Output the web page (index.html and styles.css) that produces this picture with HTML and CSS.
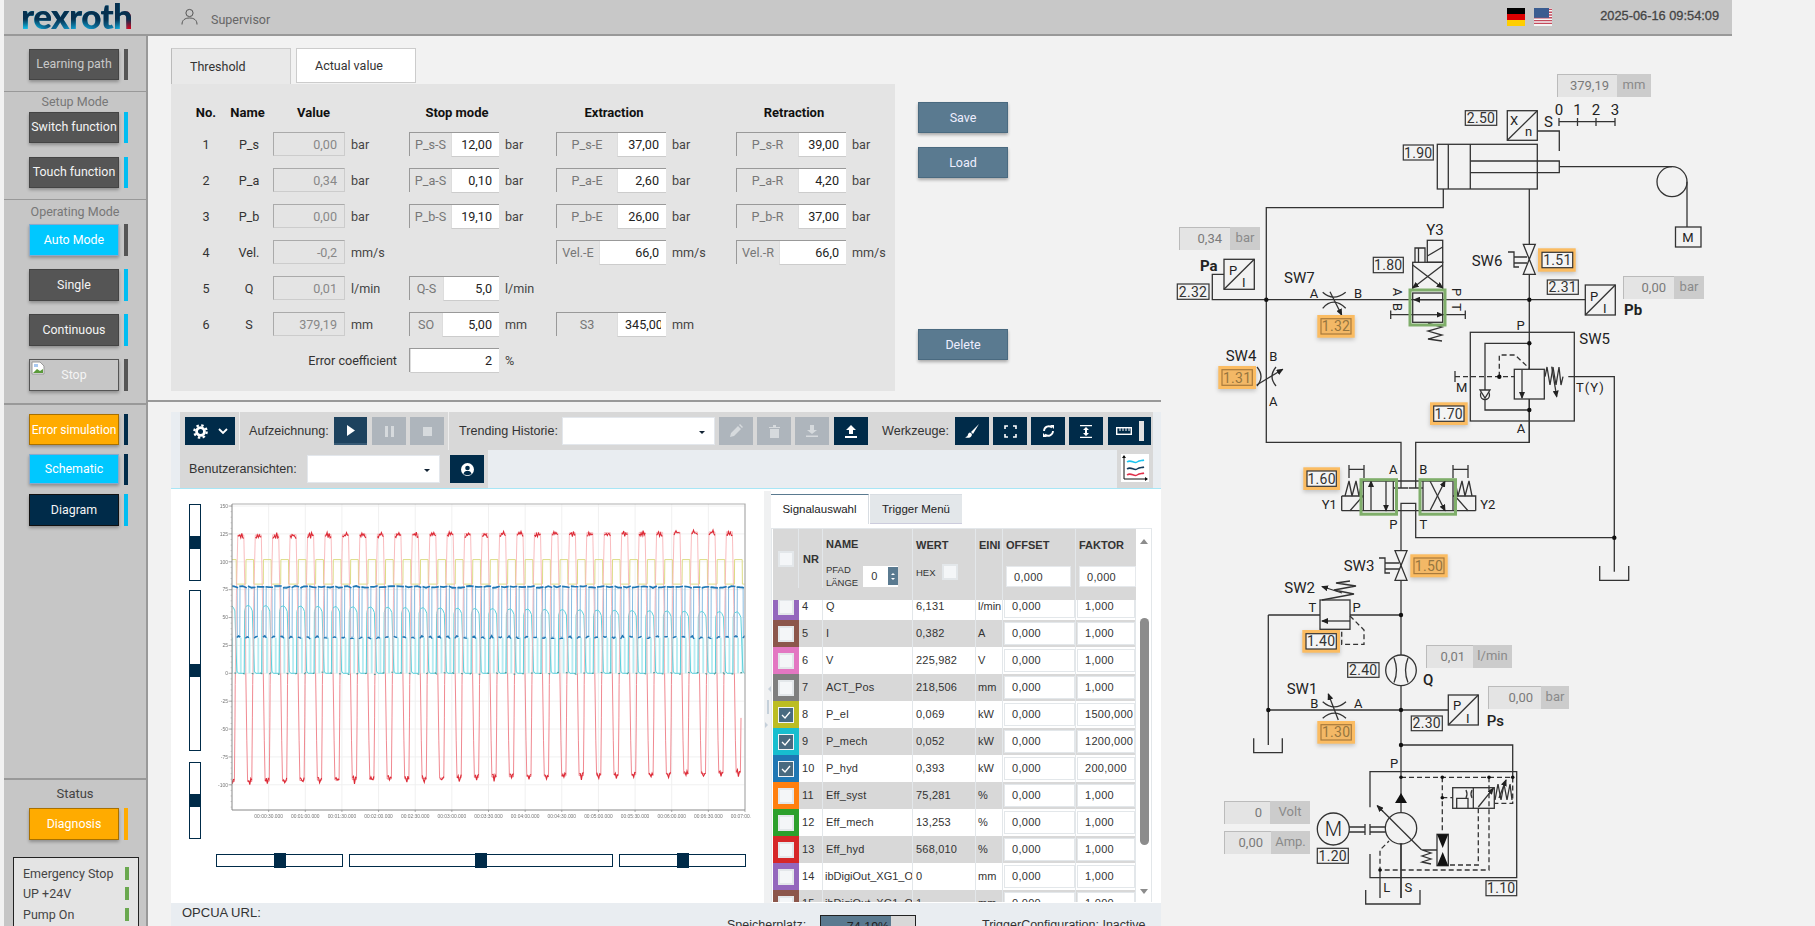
FILE: index.html
```html
<!DOCTYPE html>
<html lang="en">
<head>
<meta charset="utf-8">
<title>rexroth</title>
<link rel="stylesheet" href="styles.css">
</head>
<body>
<div class="app">
  <header class="top">
    <div class="logo">rexroth</div>
    <svg class="user" width="17" height="17" viewBox="0 0 17 17"><circle cx="8.5" cy="5" r="3.6"/><path d="M1 16.5c0-4.500 3-6.500 7.500-6.500s7.500 2 7.500 6.500"/></svg>
    <span class="who">Supervisor</span>
    <svg class="flag de" width="18" height="18" viewBox="0 0 18 18"><rect width="18" height="6" fill="#000"/><rect y="6" width="18" height="6" fill="#d00"/><rect y="12" width="18" height="6" fill="#ffce00"/></svg>
    <svg class="flag us" width="18" height="18" viewBox="0 0 18 18"><rect width="18" height="18" fill="#f4f4f4"/><path d="M0 1.400h18M0 4.200h18M0 7h18M0 9.800h18M0 12.600h18M0 15.400h18" stroke="#c44a5c" stroke-width="1.400"/><rect width="15" height="9.800" fill="#3a5c90"/></svg>
    <span class="clock">2025-06-16 09:54:09</span>
  </header>
  <div class="body">
    <aside class="side">
      <section class="s1">
        <div class="srow"><button class="btn dim">Learning path</button><i class="led grey"></i></div>
      </section>
      <section class="s2">
        <h4>Setup Mode</h4>
        <div class="srow"><button class="btn">Switch function</button><i class="led cyan"></i></div>
        <div class="srow"><button class="btn">Touch function</button><i class="led cyan"></i></div>
      </section>
      <section class="s3">
        <h4>Operating Mode</h4>
        <div class="srow"><button class="btn tall on">Auto Mode</button><i class="led grey tallled"></i></div>
        <div class="srow"><button class="btn tall">Single</button><i class="led cyan tallled"></i></div>
        <div class="srow"><button class="btn tall">Continuous</button><i class="led cyan tallled"></i></div>
        <div class="srow"><button class="btn tall stop"><svg class="broken" width="14" height="14" viewBox="0 0 14 14"><path d="M1 1h8l4 4v8H1z" fill="#fff" stroke="#999"/><path d="M2 12l4-4 3 2 3-2v4z" fill="#5a9a3a"/><path d="M3 3h4v3H3z" fill="#a8c8f0"/></svg>Stop</button><i class="led grey tallled"></i></div>
      </section>
      <section class="s4">
        <div class="srow"><button class="btn orange errb">Error simulation</button><i class="led navy"></i></div>
        <div class="srow"><button class="btn on sm">Schematic</button><i class="led navy"></i></div>
        <div class="srow"><button class="btn navybtn tall">Diagram</button><i class="led cyan tallled"></i></div>
      </section>
      <section class="s5">
        <h4 class="status">Status</h4>
        <div class="srow"><button class="btn orange tall">Diagnosis</button><i class="led orangeled tallled"></i></div>
        <div class="statusbox">
          <div class="st"><span>Emergency Stop</span><i></i></div>
          <div class="st"><span>UP +24V</span><i></i></div>
          <div class="st"><span>Pump On</span><i></i></div>
        </div>
      </section>
    </aside>

    <main class="left">
      <div class="upper">
        <div class="params">
          <div class="tabs">
            <div class="tab active">Threshold</div>
            <div class="tab white">Actual value</div>
          </div>
          <div class="panel">
            <div class="pgrid">
              <b class="ph c">No.</b><b class="ph c2">Name</b><b class="ph c3">Value</b><span></span><b class="ph c5">Stop mode</b><span></span><b class="ph c5">Extraction</b><span></span><b class="ph c5">Retraction</b><span></span>

              <span class="c">1</span><span class="c2">P_s</span><span class="val">0,00</span><span class="u">bar</span>
              <div class="ig"><span class="il">P_s-S</span><span class="in w48">12,00</span></div><span class="u">bar</span>
              <div class="ig"><span class="il">P_s-E</span><span class="in w49">37,00</span></div><span class="u">bar</span>
              <div class="ig"><span class="il">P_s-R</span><span class="in w48">39,00</span></div><span class="u">bar</span>

              <span class="c">2</span><span class="c2">P_a</span><span class="val">0,34</span><span class="u">bar</span>
              <div class="ig"><span class="il">P_a-S</span><span class="in w48">0,10</span></div><span class="u">bar</span>
              <div class="ig"><span class="il">P_a-E</span><span class="in w49">2,60</span></div><span class="u">bar</span>
              <div class="ig"><span class="il">P_a-R</span><span class="in w48">4,20</span></div><span class="u">bar</span>

              <span class="c">3</span><span class="c2">P_b</span><span class="val">0,00</span><span class="u">bar</span>
              <div class="ig"><span class="il">P_b-S</span><span class="in w48">19,10</span></div><span class="u">bar</span>
              <div class="ig"><span class="il">P_b-E</span><span class="in w49">26,00</span></div><span class="u">bar</span>
              <div class="ig"><span class="il">P_b-R</span><span class="in w48">37,00</span></div><span class="u">bar</span>

              <span class="c">4</span><span class="c2">Vel.</span><span class="val">-0,2</span><span class="u">mm/s</span>
              <span></span><span></span>
              <div class="ig"><span class="il">Vel.-E</span><span class="in w67">66,0</span></div><span class="u">mm/s</span>
              <div class="ig"><span class="il">Vel.-R</span><span class="in w67">66,0</span></div><span class="u">mm/s</span>

              <span class="c">5</span><span class="c2">Q</span><span class="val">0,01</span><span class="u">l/min</span>
              <div class="ig"><span class="il">Q-S</span><span class="in w56">5,0</span></div><span class="u">l/min</span>
              <span></span><span></span><span></span><span></span>

              <span class="c">6</span><span class="c2">S</span><span class="val">379,19</span><span class="u">mm</span>
              <div class="ig"><span class="il">SO</span><span class="in w57">5,00</span></div><span class="u">mm</span>
              <div class="ig"><span class="il">S3</span><span class="in w49 clip"><span>345,00</span></span></div><span class="u">mm</span>
              <span></span><span></span>

              <span class="errlab">Error coefficient</span>
              <div class="ig"><span class="in wfull">2</span></div><span class="u">%</span>
            </div>
          </div>
        </div>
        <div class="actions">
          <button class="act save">Save</button>
          <button class="act load">Load</button>
          <button class="act del">Delete</button>
        </div>
      </div>

      <div class="trend">
        <div class="tb">
          <div class="tb1">
            <button class="ib gearb"><svg width="15" height="15" viewBox="0 0 16 16"><circle cx="8" cy="8" r="4.200" fill="none" stroke="#fff" stroke-width="3"/><circle cx="8" cy="8" r="6.600" fill="none" stroke="#fff" stroke-width="2.400" stroke-dasharray="2.600 2.580"/></svg><svg class="chev" width="10" height="7" viewBox="0 0 10 7"><path d="M1 1l4 4 4-4" fill="none" stroke="#fff" stroke-width="1.800"/></svg></button>
            <i class="sep s-a"></i>
            <span class="tl l-a">Aufzeichnung:</span>
            <button class="ib pl"><svg width="10" height="11" viewBox="0 0 10 11"><path d="M1 0l8 5.500-8 5.500z" fill="#fff"/></svg></button>
            <button class="ib off m5"><svg width="9" height="11" viewBox="0 0 9 11"><path d="M0 0h3v11H0zM6 0h3v11H6z" fill="#d6dadd"/></svg></button>
            <button class="ib off m4"><svg width="9" height="9" viewBox="0 0 9 9"><path d="M0 0h9v9H0z" fill="#d6dadd"/></svg></button>
            <i class="sep s-b"></i>
            <span class="tl l-t">Trending Historie:</span>
            <div class="sel sel-t"><i class="caret"></i></div>
            <button class="ib off m4"><svg width="14" height="14" viewBox="0 0 14 14"><path d="M1 13l1-4 7-7 3 3-7 7zM10 1l1-1 3 3-1 1z" fill="#d6dadd"/></svg></button>
            <button class="ib off m4"><svg width="11" height="13" viewBox="0 0 11 13"><path d="M0 2h11v1H0zM4 0h3v2H4zM1 4h9v9H1z" fill="#d6dadd"/></svg></button>
            <button class="ib off m4"><svg width="12" height="12" viewBox="0 0 12 12"><path d="M4 0h4v5h3L6 9 1 5h3zM0 10.500h12V12H0z" fill="#d6dadd"/></svg></button>
            <button class="ib nv m5"><svg width="12" height="13" viewBox="0 0 12 13"><path d="M6 0l5 5H8v4H4V5H1zM0 11h12v2H0z" fill="#fff"/></svg></button>
            <span class="tl l-w">Werkzeuge:</span>
            <button class="ib nv m5"><svg width="14" height="14" viewBox="0 0 14 14"><path d="M14 0L6 8l2 2zM5 8.500C3 9 3 11 2.500 12 2 12.500 1 13 0 13c2 1.500 5.500 1 6.500-1 .5-1 .5-2 0-2.500z" fill="#fff"/></svg></button>
            <button class="ib nv m4"><svg width="13" height="13" viewBox="0 0 13 13"><path d="M1 4V1h3M9 1h3v3M12 9v3H9M4 12H1V9" fill="none" stroke="#fff" stroke-width="1.600"/></svg></button>
            <button class="ib nv m4"><svg width="13" height="14" viewBox="0 0 13 14"><path d="M2 7a4.800 4.800 0 0 1 8-3.500M11 7a4.800 4.800 0 0 1-8 3.500" fill="none" stroke="#fff" stroke-width="1.800"/><path d="M8 1h4v4zM5 13H1V9z" fill="#fff"/></svg></button>
            <button class="ib nv m4"><svg width="12" height="13" viewBox="0 0 12 13"><path d="M0 .5h12M0 12.500h12" stroke="#fff" stroke-width="1.400"/><path d="M6 2l3 3H3zM6 11l3-3H3z" fill="#fff"/><path d="M5 4.500h2v4H5z" fill="#fff"/></svg></button>
            <button class="ib nv ruler"><svg width="16" height="8" viewBox="0 0 16 8"><rect x=".7" y=".7" width="14.600" height="6.600" fill="none" stroke="#fff" stroke-width="1.400"/><path d="M4 1v3M7 1v3M10 1v3M13 1v3" stroke="#fff"/></svg><i class="rbar"></i></button>
          </div>
          <div class="tb2">
            <div class="tb2l">
              <span class="tl l-b">Benutzeransichten:</span>
              <div class="sel sel-b"><i class="caret"></i></div>
              <button class="ib nv ub"><svg width="13" height="13" viewBox="0 0 13 13"><circle cx="6.500" cy="6.500" r="6.500" fill="#fff"/><circle cx="6.500" cy="5" r="2.300" fill="#002b49"/><path d="M2.500 11c.5-2.500 2-3 4-3s3.500.5 4 3c-2 1.500-6 1.500-8 0z" fill="#002b49"/></svg></button>
            </div>
            <div class="tb2r"><svg width="28" height="28" viewBox="0 0 28 28"><rect width="28" height="28" fill="#fff"/><path d="M3 2v23h23" fill="none" stroke="#111" stroke-width="1"/><path d="M3 1l-2 3h4zM27 25l-3-2v4z" fill="#111"/><path d="M6 8c4-3 7 2 10 0s5-1 7-2" fill="none" stroke="#19c4f0" stroke-width="1.500"/><path d="M6 15c4-3 7 2 10 0s5-1 7-2" fill="none" stroke="#123a5a" stroke-width="1.500"/><path d="M6 21c4-3 7 2 10 0s5-1 7-2" fill="none" stroke="#e0304a" stroke-width="1.500"/></svg></div>
          </div>
        </div>
        <div class="content">
          <div class="chartcol">
            <div class="chartrow">
              <div class="vsl">
                <div class="vs vs1"><i></i></div>
                <div class="vs vs2"><i></i></div>
                <div class="vs vs3"><i></i></div>
              </div>
              <svg id="chart" class="chart" viewBox="206 496 545 340" width="545" height="340"></svg>
            </div>
            <div class="hsl">
              <div class="hs h1"><i></i></div>
              <div class="hs h2"><i></i></div>
              <div class="hs h3"><i></i></div>
            </div>
          </div>
          <div class="split"><i class="a"></i><i class="b"></i><i class="a2"></i></div>
          <div class="sig">
            <div class="sigtabs"><div class="st1">Signalauswahl</div><div class="st2">Trigger Menü</div></div>
            <div class="sigbox">
              <div class="sigtable">
                <div class="shead">
                  <div class="hc hc-c"><i class="cb"></i></div>
                  <div class="hc hc-nr">NR</div>
                  <div class="hc hc-name"><b>NAME</b><div class="pfad"><span>PFAD<br>LÄNGE</span><div class="spin"><em>0</em><i><u></u><s></s></i></div></div></div>
                  <div class="hc hc-wert"><b>WERT</b><div class="hex"><span>HEX</span><i class="cb"></i></div></div>
                  <div class="hc hc-eh"><b>EINI</b></div>
                  <div class="hc hc-of"><b>OFFSET</b><div class="hin">0,000</div></div>
                  <div class="hc hc-fa"><b>FAKTOR</b><div class="hin">0,000</div></div>
                </div>
                <div class="srows">
                  <div class="r first"><div class="k k4"><i class="cb"></i></div><span>4</span><span>Q</span><span>6,131</span><span class="eh">l/min</span><div class="ci"><em>0,000</em></div><div class="ci"><em>1,000</em></div></div>
                  <div class="r alt"><div class="k k5"><i class="cb"></i></div><span>5</span><span>I</span><span>0,382</span><span class="eh">A</span><div class="ci"><em>0,000</em></div><div class="ci"><em>1,000</em></div></div>
                  <div class="r"><div class="k k6"><i class="cb"></i></div><span>6</span><span>V</span><span>225,982</span><span class="eh">V</span><div class="ci"><em>0,000</em></div><div class="ci"><em>1,000</em></div></div>
                  <div class="r alt"><div class="k k7"><i class="cb"></i></div><span>7</span><span>ACT_Pos</span><span>218,506</span><span class="eh">mm</span><div class="ci"><em>0,000</em></div><div class="ci"><em>1,000</em></div></div>
                  <div class="r"><div class="k k8"><i class="cb chk"><svg width="10" height="8" viewBox="0 0 10 8"><path d="M1 4l3 3 5-6" fill="none" stroke="#fff" stroke-width="1.300"/></svg></i></div><span>8</span><span>P_el</span><span>0,069</span><span class="eh">kW</span><div class="ci"><em>0,000</em></div><div class="ci"><em>1500,000</em></div></div>
                  <div class="r alt"><div class="k k9"><i class="cb chk"><svg width="10" height="8" viewBox="0 0 10 8"><path d="M1 4l3 3 5-6" fill="none" stroke="#fff" stroke-width="1.300"/></svg></i></div><span>9</span><span>P_mech</span><span>0,052</span><span class="eh">kW</span><div class="ci"><em>0,000</em></div><div class="ci"><em>1200,000</em></div></div>
                  <div class="r"><div class="k k10"><i class="cb chk"><svg width="10" height="8" viewBox="0 0 10 8"><path d="M1 4l3 3 5-6" fill="none" stroke="#fff" stroke-width="1.300"/></svg></i></div><span>10</span><span>P_hyd</span><span>0,393</span><span class="eh">kW</span><div class="ci"><em>0,000</em></div><div class="ci"><em>200,000</em></div></div>
                  <div class="r alt"><div class="k k11"><i class="cb"></i></div><span>11</span><span>Eff_syst</span><span>75,281</span><span class="eh">%</span><div class="ci"><em>0,000</em></div><div class="ci"><em>1,000</em></div></div>
                  <div class="r"><div class="k k12"><i class="cb"></i></div><span>12</span><span>Eff_mech</span><span>13,253</span><span class="eh">%</span><div class="ci"><em>0,000</em></div><div class="ci"><em>1,000</em></div></div>
                  <div class="r alt"><div class="k k13"><i class="cb"></i></div><span>13</span><span>Eff_hyd</span><span>568,010</span><span class="eh">%</span><div class="ci"><em>0,000</em></div><div class="ci"><em>1,000</em></div></div>
                  <div class="r"><div class="k k4"><i class="cb"></i></div><span>14</span><span class="nm">ibDigiOut_XG1_O</span><span>0</span><span class="eh">mm</span><div class="ci"><em>0,000</em></div><div class="ci"><em>1,000</em></div></div>
                  <div class="r alt"><div class="k k5"><i class="cb"></i></div><span>15</span><span class="nm">ibDigiOut_XG1_O</span><span>1</span><span class="eh">mm</span><div class="ci"><em>0,000</em></div><div class="ci"><em>1,000</em></div></div>
                </div>
              </div>
              <div class="vscroll"><i class="up"></i><i class="thumb"></i><i class="down"></i></div>
            </div>
          </div>
        </div>
        <div class="foot">
          <span class="opc">OPCUA URL:</span>
          <span class="mem">Speicherplatz:</span>
          <div class="bar"><i></i><span>74,19%</span></div>
          <span class="trig">TriggerConfiguration: Inactive</span>
        </div>
      </div>
    </main>

    <div class="scheme">
      <svg class="diagram" viewBox="1161 36 571 890" width="571" height="890">
        <defs>
          <marker id="ah" markerWidth="7" markerHeight="6" refX="6" refY="3" orient="auto" markerUnits="userSpaceOnUse"><path d="M0 0L7 3L0 6z" fill="#222"/></marker>
        </defs>
        <g class="ln">
          <!-- position sensor -->
          <rect x="1507.300" y="110.700" width="30" height="29.600"/><path d="M1507.300 140.300L1537.300 110.700"/>
          <path d="M1559 121.700H1615M1559 118V126M1577.500 118V126M1596 118V126M1615 118V126"/>
          <path d="M1537.300 131H1559.300V151"/>
          <!-- cylinder -->
          <rect x="1437.300" y="144.300" width="100" height="44.700"/>
          <path d="M1448.300 144.300V189M1470.300 144.300V189"/>
          <path d="M1470.300 161H1559.300V172.700H1470.300"/>
          <path d="M1559.300 166.700H1672"/>
          <circle cx="1672" cy="181.700" r="15"/>
          <path d="M1687 181.700V227"/>
          <rect x="1675.500" y="227" width="25.500" height="20"/>
          <!-- pipes -->
          <path d="M1443.300 189V207.700H1266.300V442.300H1401V488"/>
          <path d="M1529.300 189V442.300H1415.700V488"/>
          <path d="M1415.700 510.700V537.700H1614.300"/>
          <path d="M1401 510.700V898"/>
          <path d="M1401 510.700V503.300H1415.700V510.700"/>
          <path d="M1394 488H1408M1408.700 488H1423"/>
          <path d="M1568.300 376.700H1614.300V571.700"/>
          <path d="M1599.700 566V580.300H1628.700V566"/>
          <path d="M1224 274.300H1212.300V299.700H1585.300"/>
          <rect x="1224" y="259.300" width="30.300" height="30"/><path d="M1224 289.300L1254.300 259.300"/>
          <rect x="1585.300" y="285" width="30" height="30"/><path d="M1585.300 315L1615.300 285"/>
          <!-- throttle SW7 -->
          <path d="M1322.700 292.300Q1333.300 302 1345.700 292.300M1322.700 308.300Q1333.300 296 1345.700 308.300"/>
          <path d="M1330 291.700L1341.700 315" marker-end="url(#ah)"/>
          <!-- valve Y3 -->
          <rect x="1427.300" y="240.300" width="15.400" height="22"/><path d="M1427.300 256L1442.700 247"/>
          <path d="M1415 262.300V248H1425V262.300M1418.500 248V262.300"/>
          <rect x="1412.700" y="262.300" width="30" height="27.700"/>
          <path d="M1412.700 265L1442.700 288" marker-end="url(#ah)"/><path d="M1442.700 265L1412.700 288" marker-end="url(#ah)"/>
          <rect x="1412.700" y="293" width="30" height="29.300"/>
          <path d="M1442.700 299.700H1414" marker-end="url(#ah)"/><path d="M1412.700 314.700H1442.700" marker-end="url(#ah)"/>
          <path d="M1428 323L1442 327L1428 331L1442 335L1428 339L1442 341"/>
          <path d="M1390.700 314.700H1412.700M1390.700 310.500V319M1442.700 314.700H1465.300M1465.300 310.500V319"/>
          <!-- SW6 -->
          <path d="M1523.300 244.300H1535.300L1529.300 259.300ZM1529.300 259.300L1523.300 274.300H1535.300Z" class="bg"/>
          <path d="M1508 252H1514V267H1519M1514 257H1527M1514 263H1527"/>
          <!-- SW5 -->
          <rect x="1470.300" y="332.300" width="104" height="88.700"/>
          <path d="M1529.300 343.300H1485V410H1529.300"/>
          <rect x="1514.300" y="369.300" width="30" height="29.700" class="bg"/>
          <path d="M1522 370V398" marker-end="url(#ah)"/>
          <path d="M1529.300 343.300V369.300M1529.300 399V442.300"/>
          <path class="dash" d="M1499.300 376.700V355H1515L1529.300 368.300"/>
          <path class="dash" d="M1455 376.700H1514.300"/>
          <path d="M1455 371V382"/>
          <circle cx="1485" cy="395" r="4.500" class="bg"/><path d="M1480 390L1490 390L1485 398Z" class="bg"/>
          <path d="M1545 376.700L1547 367L1550 385L1553 367L1556 385L1559 367L1561 385L1563 376.700"/>
          <path d="M1551.700 366.700L1556.700 396.700" marker-end="url(#ah)"/>
          <!-- SW4 throttle -->
          <path d="M1257 367Q1265 376.700 1257 386M1276 367Q1268 376.700 1276 386"/>
          <path d="M1256.700 385L1282.700 369.300" marker-end="url(#ah)"/>
          <!-- 2 pos valve -->
          <path d="M1363.300 481H1452.700M1341.700 510.700H1475.700"/>
          <path d="M1363.300 481V510.700M1393.300 481V510.700M1423 481V510.700M1453 481V510.700"/>
          <path d="M1371 510.700V481" marker-end="url(#ah)"/><path d="M1386 481V510.700" marker-end="url(#ah)"/>
          <path d="M1430 510.700L1445 481" marker-end="url(#ah)"/><path d="M1430 481L1445 510.700" marker-end="url(#ah)"/>
          <path d="M1341.700 496H1363.300M1341.700 496V510.700M1350 510.700L1363 496"/>
          <path d="M1453 496H1475.700V510.700M1455 496L1468 510.700"/>
          <path d="M1345 496L1349 481L1352 496L1356 481L1359 496L1362 481"/>
          <path d="M1455 481L1458 496L1462 481L1465 496L1469 481L1472 496"/>
          <path d="M1349 469.300H1364M1349 465V478M1364 465V478M1453 469.300H1468M1453 465V478M1468 465V478"/>
          <!-- SW3 -->
          <path d="M1395 550.700H1407L1401 565.500ZM1401 565.500L1395 580.300H1407Z" class="bg"/>
          <path d="M1379 558H1385V573H1390M1385 563H1399M1385 569H1399"/>
          <!-- SW2 -->
          <rect x="1320" y="600" width="30" height="29.300"/>
          <path d="M1350 621H1322" marker-end="url(#ah)"/>
          <path d="M1268.300 615H1320M1350 615H1401M1268.300 615V745"/>
          <path class="dash" d="M1350 616L1364 630V644.300H1341.700V630"/>
          <path d="M1322 600L1354 594L1334 590L1356 586L1336 583L1350 581"/>
          <path d="M1342 593L1322 586.500" marker-end="url(#ah)"/>
          <!-- flow meter -->
          <circle cx="1401" cy="670.300" r="15.300" class="bg"/>
          <path d="M1394 658Q1399 670.300 1394 682.600M1408 658Q1403 670.300 1408 682.600"/>
          <!-- SW1 line -->
          <path d="M1268.300 710H1448.300"/>
          <path d="M1322.700 701.700Q1334.300 712 1346 701.700M1322.700 718.300Q1334.300 708 1346 718.300"/>
          <path d="M1338.300 720L1328.300 694" marker-end="url(#ah)"/>
          <path d="M1253.700 738.300V752.700H1282.300V738.300"/>
          <rect x="1448.300" y="695" width="30" height="30"/><path d="M1448.300 725L1478.300 695"/>
          <!-- pump -->
          <path d="M1401 745H1512.700V777.300"/>
          <path d="M1370 807.300V771.700H1516.700V877.700H1370V854"/>
          <path class="dash" d="M1401 777.300H1512.700V803.300H1494.300"/>
          <path class="dash" d="M1442.300 777.300V833.300M1442.300 797.700H1452.700"/>
          <path class="dash" d="M1489 777.300V870H1380V850L1389 841"/>
          <path class="dash" d="M1478.300 808.300V865H1448.300"/>
          <rect x="1452.700" y="787.700" width="41.600" height="20.600"/>
          <path d="M1473.300 787.700V808.300M1456.700 808.300V798.300H1468V808.300"/>
          <path d="M1466 790Q1468 794 1466 798M1472 790Q1470 794 1472 798"/>
          <path d="M1478.300 807L1493.300 788.300" marker-end="url(#ah)"/>
          <path d="M1495 800L1498 784L1501 800L1504 784L1507 800L1510 784L1512 800"/>
          <path d="M1499 798L1506 780" marker-end="url(#ah)"/>
          <circle cx="1401" cy="828.300" r="15.700" class="bg"/>
          <path d="M1377.300 805.700L1421.700 850"/>
          <path d="M1383 811.400L1377.300 805.700" marker-end="url(#ah)"/>
          <path d="M1349 827H1365M1349 832H1365M1365 824V835M1370 824V835M1370 827H1385.300M1370 832H1385.300"/>
          <circle cx="1333.300" cy="829" r="16" class="bg"/>
          <path d="M1422 850H1437M1422 850L1431 853L1422 856L1431 859L1422 862L1431 864"/>
          <rect x="1437" y="834.300" width="11.300" height="31.400"/>
          <path d="M1380 870V898M1401 843V898"/>
          <path d="M1365.700 890V904H1420V890"/>
        </g>
        <path d="M1395 803L1407 803L1401 793Z" fill="#111"/>
        <path d="M1437 834.300H1448.300L1442.700 848ZM1437 865.700H1448.300L1442.700 852Z" fill="#111"/>
        <g class="dots">
          <circle cx="1266.300" cy="299.700" r="2.200"/><circle cx="1529.300" cy="299.700" r="2.200"/>
          <circle cx="1529.300" cy="343.300" r="2.200"/><circle cx="1529.300" cy="410" r="2.200"/>
          <circle cx="1499.300" cy="376.700" r="2.200"/><circle cx="1614.300" cy="537.700" r="2.200"/>
          <circle cx="1401" cy="615" r="2.200"/><circle cx="1268.300" cy="710" r="2.200"/>
          <circle cx="1401" cy="710" r="2.200"/><circle cx="1401" cy="745" r="2.200"/>
          <circle cx="1401" cy="777.300" r="1.800"/><circle cx="1442.300" cy="777.300" r="1.800"/>
          <circle cx="1489" cy="777.300" r="1.800"/><circle cx="1512.700" cy="777.300" r="1.800"/>
          <circle cx="1442.300" cy="797.700" r="1.800"/><circle cx="1380" cy="870" r="1.800"/>
        </g>
        <g class="dt">
          <text x="1544" y="127">S</text>
          <text x="1559" y="115" class="mid">0</text><text x="1577.500" y="115" class="mid">1</text><text x="1596" y="115" class="mid">2</text><text x="1615" y="115" class="mid">3</text>
          <text x="1510" y="125" class="sm">X</text><text x="1525" y="136" class="sm">n</text>
          <text x="1229" y="275" class="sm">P</text><text x="1242" y="287" class="sm">I</text>
          <text x="1590" y="301" class="sm">P</text><text x="1603" y="313" class="sm">I</text>
          <text x="1453" y="710" class="sm">P</text><text x="1466" y="723" class="sm">I</text>
          <text x="1688" y="242" class="sm mid">M</text>
          <text x="1200" y="271" class="bd">Pa</text>
          <text x="1624" y="315" class="bd">Pb</text>
          <text x="1486.700" y="726" class="bd2">Ps</text>
          <text x="1284" y="283">SW7</text>
          <text x="1314" y="298" class="sm mid">A</text><text x="1358" y="298" class="sm mid">B</text>
          <text x="1435" y="235" class="mid">Y3</text>
          <text x="1471.700" y="266">SW6</text>
          <text x="1520.700" y="330" class="sm mid">P</text>
          <text x="1579.300" y="344">SW5</text>
          <text x="1225.700" y="361">SW4</text>
          <text x="1273.300" y="361" class="sm mid">B</text><text x="1273.300" y="406" class="sm mid">A</text>
          <text x="1461.700" y="392" class="sm mid">M</text>
          <text x="1576" y="392" class="sm ty">T(Y)</text>
          <text x="1521" y="433" class="sm mid">A</text>
          <text x="1393.300" y="474" class="sm mid">A</text><text x="1423.300" y="474" class="sm mid">B</text>
          <text x="1393.300" y="529" class="sm mid">P</text><text x="1423.300" y="529" class="sm mid">T</text>
          <text x="1329.300" y="509" class="sm mid">Y1</text><text x="1487.700" y="509" class="sm mid">Y2</text>
          <text x="1343.700" y="571">SW3</text>
          <text x="1284.300" y="593">SW2</text>
          <text x="1312.300" y="612" class="sm mid">T</text><text x="1356.700" y="612" class="sm mid">P</text>
          <text x="1423" y="685" class="bd2">Q</text>
          <text x="1286.700" y="694">SW1</text>
          <text x="1314.300" y="708" class="sm mid">B</text><text x="1358.300" y="708" class="sm mid">A</text>
          <text x="1394" y="768" class="sm mid">P</text>
          <text x="1386.700" y="892" class="sm mid">L</text><text x="1408.300" y="892" class="sm mid">S</text>
          <text x="1333.300" y="836" class="big mid">M</text>
          <text class="sm mid" transform="translate(1393 292) rotate(90)">A</text>
          <text class="sm mid" transform="translate(1393 307) rotate(90)">B</text>
          <text class="sm mid" transform="translate(1452 292) rotate(90)">P</text>
          <text class="sm mid" transform="translate(1452 307) rotate(90)">T</text>
        </g>
        <g class="tagn">
          <rect x="1465.300" y="110.700" width="31.400" height="14.600"/><text x="1481" y="123">2.50</text>
          <rect x="1403.300" y="145" width="30" height="15"/><text x="1418.300" y="157.500">1.90</text>
          <rect x="1177.300" y="284" width="31.700" height="15.300"/><text x="1193" y="296.500">2.32</text>
          <rect x="1373.300" y="257.300" width="30" height="15.400"/><text x="1388.300" y="270">1.80</text>
          <rect x="1547.300" y="280" width="31" height="14.300"/><text x="1562.800" y="292">2.31</text>
          <rect x="1347.700" y="662.700" width="31.300" height="14.600"/><text x="1363.300" y="675">2.40</text>
          <rect x="1411.300" y="716" width="31" height="14.700"/><text x="1426.800" y="728">2.30</text>
          <rect x="1317.300" y="848.300" width="31" height="15"/><text x="1332.800" y="860.500">1.20</text>
          <rect x="1486" y="880.700" width="30.700" height="15"/><text x="1501.300" y="893">1.10</text>
        </g>
        <g class="tago">
          <rect class="o" x="1538" y="248.300" width="37.700" height="23.400"/><rect class="w" x="1542" y="252.300" width="30.700" height="15.400"/><text x="1557.400" y="265">1.51</text>
          <rect class="o" x="1303.300" y="467.300" width="36.700" height="22.700"/><rect class="w" x="1307" y="471" width="29.300" height="15.300"/><text x="1321.700" y="483.500">1.60</text>
          <rect class="o" x="1302.300" y="630" width="37.700" height="22.700"/><rect class="w" x="1306" y="633.700" width="30.300" height="15.300"/><text x="1321.200" y="646">1.40</text>
          <rect class="o" x="1430" y="402.300" width="37.700" height="22.700"/><rect class="w" x="1433.700" y="406" width="30.300" height="15.300"/><text x="1448.800" y="418.500">1.70</text>
        </g>
        <g class="tago f">
          <rect class="o" x="1317.300" y="315" width="37.400" height="22.700"/><rect class="w" x="1321" y="318.700" width="30" height="15.300"/><text x="1336" y="331">1.32</text>
          <rect class="o" x="1218.300" y="366" width="37.700" height="23"/><rect class="w" x="1222" y="369.700" width="30.300" height="15.600"/><text x="1237.200" y="382.500">1.31</text>
          <rect class="o" x="1410.300" y="554.300" width="37.400" height="23"/><rect class="w" x="1414" y="558" width="30" height="15.600"/><text x="1429" y="570.500">1.50</text>
          <rect class="o" x="1317.300" y="721" width="37.700" height="22.700"/><rect class="w" x="1321" y="724.700" width="30.300" height="15.300"/><text x="1336.200" y="737">1.30</text>
        </g>
        <g class="green">
          <rect x="1410" y="290" width="35" height="35"/>
          <rect x="1361" y="479.700" width="35.500" height="34.500"/>
          <rect x="1420" y="479.700" width="35.500" height="34.500"/>
        </g>
      </svg>
      <div class="disp d1"><span class="v">379,19</span><span class="un">mm</span></div>
      <div class="disp d2"><span class="v">0,34</span><span class="un">bar</span></div>
      <div class="disp d3"><span class="v">0,00</span><span class="un">bar</span></div>
      <div class="disp d4"><span class="v">0,01</span><span class="un">l/min</span></div>
      <div class="disp d5"><span class="v">0,00</span><span class="un">bar</span></div>
      <div class="disp d6"><span class="v">0</span><span class="un">Volt</span></div>
      <div class="disp d7"><span class="v">0,00</span><span class="un">Amp.</span></div>
    </div>
  </div>
</div>
<script src="chart.js"></script>
</body>
</html>
```
FILE: styles.css
```css
*{box-sizing:border-box}
html,body{margin:0;height:926px;overflow:hidden}
body{background:#f2f2f2;font-family:Roboto,"Liberation Sans",sans-serif;font-size:13px;color:#333}
button{font:inherit;padding:0;cursor:default}
.app{width:1728px;margin-left:4px;display:flex;flex-direction:column;height:926px}

.top{height:36px;flex:none;background:#c8c8c8;border-bottom:2px solid #999;display:flex;align-items:center;position:relative}
.logo{margin-left:17px;width:112px;font-family:Lato,Roboto,sans-serif;font-weight:900;font-size:35px;line-height:34px;letter-spacing:-.6px;height:34px;margin-top:-5px;
  color:transparent;background:linear-gradient(180deg,#06304f 62%,rgba(6,48,79,0) 92%),linear-gradient(90deg,#12c8f4 0%,#12c8f4 12%,#0d5f8c 25%,#12b8ea 55%,#0d5f8c 72%,#16b4e4 88%,#e2001a 96%);-webkit-background-clip:text;background-clip:text}
.user{margin-left:48px;fill:none;stroke:#555;stroke-width:1;margin-top:-1px}
.who{margin-left:13px;color:#666;font-size:12.500px;margin-top:5px}
.flag{margin-top:0}
.de{margin-left:1237px}
.us{margin-left:9px}
.clock{margin-left:48px;font-family:"Liberation Sans",sans-serif;font-size:12.800px;color:#444;font-weight:500;-webkit-text-stroke:.3px #444;margin-top:-3px}

.body{flex:1;display:flex;min-height:0}
.side{width:144px;flex:none;background:#c6c6c6;border-right:2px solid #999;display:flex;flex-direction:column}
.side section{padding:0}
.side h4{margin:0;font-weight:400;font-size:12.500px;line-height:16px;text-align:center;color:#777}
.s1{height:56px;padding-top:13px!important;border-bottom:1px solid #999}
.s2{height:108px;padding-top:2px!important;border-bottom:1px solid #999}
.s2 .srow{margin-top:2px}.s2 .srow+.srow{margin-top:14px}
.s3{height:205px;padding-top:4px!important;border-bottom:2px solid #999}
.s3 .srow{margin-top:4px}.s3 .srow+.srow{margin-top:13px}
.s4{flex:1;padding-top:9px!important;border-bottom:2px solid #999}
.s4 .srow+.srow{margin-top:9px}
.s5{height:146px;padding-top:6px!important}
.s5 .status{color:#444;font-size:13px;margin-bottom:6px;height:16px}
.srow{display:flex;gap:5px;padding-left:25px}
.btn{width:90px;height:31px;border:1px solid #444;background:#555;color:#f4f4f4;font-size:12.400px;box-shadow:0 2px 3px rgba(0,0,0,.28);white-space:nowrap;line-height:1}
.btn.tall{height:32px}
.btn.sm{height:30px}
.btn.dim{color:#c8c8c8}
.btn.on{background:#00c8ff;color:#fff;border-color:#8ac}
.btn.orange{background:#ffab00;color:#fff;border-color:#a87000}
.btn.errb{font-size:12px}
.btn.navybtn{background:#002b49;border-color:#111}
.btn.stop{background:#c6c6c6;border-color:#555;position:relative;color:#f4f4f4}
.broken{position:absolute;left:1px;top:1px}
.led{width:4px;height:31px;display:block}
.led.tallled{height:32px}
.grey{background:#555}.cyan{background:#00bdf2}.navy{background:#002b49}.orangeled{background:#ffab00}
.statusbox{margin:17px 0 0 9px;width:126px;height:80px;background:#e4e4e4;border:1px solid #222;padding:5px 9px 0}
.st{display:flex;justify-content:space-between;align-items:center;height:20.500px;color:#444;font-size:12.500px}
.st i{width:4px;height:13px;background:#6aa84f}

.left{width:1013px;flex:none;display:flex;flex-direction:column;min-height:0}
.upper{height:366px;flex:none;border-bottom:2px solid #999;display:flex;padding-left:23px}
.params{width:724px;flex:none}
.tabs{display:flex;gap:5px;padding-top:12px;height:48px}
.tab{width:120px;height:36px;line-height:36px;padding-left:18px;font-size:12.500px;color:#333}
.tab.active{background:#e9e9e9;border:1px solid #ccc;border-bottom:0;border-left-color:#bbb;}
.tab.white{background:#fff;border:1px solid #ccc;height:35px;line-height:34px}
.panel{background:#e4e4e4;height:307px;padding-top:6px}
.pgrid{display:grid;grid-template-columns:54px 48px 72px 64px 90px 57px 110px 70px 110px 49px;grid-auto-rows:36px;align-items:center;font-size:12.600px;color:#333}
.ph{font-weight:700;font-size:13px;color:#111;align-self:end;padding-bottom:4px;line-height:18px;white-space:nowrap;text-align:center}
.c{text-align:center;padding-left:16px}
.c2{text-align:center}
.ph.c2{margin-left:-3px}
.ph.c3{margin-right:-9px}
.ph.c5{margin-right:-6px}
.val{height:24px;background:#e4e4e4;border:1px solid #ccc;border-top:1.500px solid #aaa;border-left:1.500px solid #aaa;text-align:right;padding-right:7px;line-height:23px;color:#888}
.u{padding-left:6px;white-space:nowrap;color:#444}
.ig{display:flex;height:24px;border-top:1px solid #999;border-left:1px solid #999}
.il{flex:1;text-align:center;line-height:23px;color:#777;white-space:nowrap}
.in{background:#fff;border-bottom:1px solid #ccc;text-align:right;padding-right:7px;line-height:23px;color:#222;flex:none;height:24px;white-space:nowrap;border-left:1px solid #ddd}
.w48{width:48px}.w49{width:49px}.w56{width:56px}.w57{width:57px}.w67{width:67px}.wfull{flex:1}
.clip{text-align:left;padding-left:7px;padding-right:1px}
.clip span{display:block;overflow:hidden;width:36px}
.errlab{grid-column:1/5;text-align:right;padding-right:12px;color:#333}
.actions{padding:66px 0 0 23px;display:flex;flex-direction:column}
.act{width:90px;height:31px;background:#5a7a90;color:#eef;border:1px solid #4a6a80;box-shadow:0 2px 3px rgba(0,0,0,.3);font-size:12.500px}
.load{margin-top:14px}
.del{margin-top:151px}

.trend{margin:10px 0 0 23px;width:990px;flex:1;display:flex;flex-direction:column;min-height:0;background:#fff;font-family:"Liberation Sans",sans-serif}
.tb{flex:none;background:#e9edf1;padding:0 8px 0 9px;height:77px;border-bottom:1px solid #a8e6f6}
.tb1{height:38px;background:#d8d8d8;display:flex;align-items:center;padding-left:5px}
.ib{width:34px;height:28px;border:0;display:flex;align-items:center;justify-content:center;background:#002b49;flex:none}
.gearb{width:50px;gap:10px}
.pl{background:#1d425e;border-bottom:2px solid #375a75;width:33px;margin-left:5px}
.off{background:#aeb5bc}
.m5{margin-left:5px}.m4{margin-left:4px}
.sep{width:1px;height:38px;background:#eee;flex:none}
.s-a{margin-left:4px}
.s-b{margin-left:4px}
.tl{font-size:12.600px;color:#333;white-space:nowrap}
.l-a{margin-left:9px;margin-right:-1px;width:81px}
.l-t{margin-left:10px;width:103px}
.l-w{margin-left:14px;width:68px}
.l-b{margin-left:9px;width:118px}
.sel{height:28px;background:#fff;border:1px solid #e3e7ec;position:relative;flex:none}
.sel-t{width:153px}
.sel-b{width:133px}
.caret{position:absolute;right:9px;top:13px;width:0;height:0;border:3px solid transparent;border-top:3px solid #123;}
.ruler{width:43px;margin-left:5px;gap:7px}
.rbar{width:5px;height:20px;background:#e2e2e2;display:block}
.tb2{display:flex;justify-content:space-between;height:38px}
.tb2l{width:308px;background:#d8d8d8;display:flex;align-items:center;padding-bottom:0;height:38px}
.ub{margin-left:10px}
.tb2r{width:36px;background:#d8d8d8;padding:4px;height:38px}
.tb2r svg{display:block}
.content{flex:none;height:414px;display:flex;overflow:hidden;background:#fff}
.chartcol{width:593px;flex:none}
.chartrow{display:flex;padding-top:7px;align-items:flex-start;height:347px}
.vsl{width:35px;flex:none;padding:8px 0 0 18px}
.vs{width:12px;border:1px solid #002b49;display:flex;align-items:center;background:#fff}
.vs i{display:block;width:100%;height:13px;background:#002b49}
.vs1{height:77px}.vs2{height:161px;margin-top:9px}.vs3{height:77px;margin-top:11px}
.chart{display:block;filter:blur(.3px)}
.hsl{display:flex;margin:18px 0 0 45px;gap:6px}
.hs{height:13px;border:1px solid #002b49;display:flex;justify-content:center;align-items:center;background:#fff}
.hs i{display:block;width:12px;height:15px;background:#002b49;flex:none}
.h1{width:127px}.h2{width:264px}.h3{width:127px}
.split{width:7px;flex:none;background:#f0f1f2;display:flex;flex-direction:column;align-items:center;justify-content:center;gap:8px;margin-top:2px;padding-top:20px}
.split i{display:block}
.split .a,.split .a2{width:0;height:0;border:3px solid transparent}
.split .a{border-right-color:#c5d0da}
.split .a2{border-left-color:#c5d0da}
.split .b{width:2px;height:14px;background:#c5d0da}
.sig{width:381px;flex:none;padding-top:5px;font-size:11px;color:#333}
.sigtabs{display:flex;height:30px}
.st1{width:98px;background:#fff;border-top:1px solid #5a7a90;border-right:1px solid #d8dde2;text-align:center;line-height:28px;font-size:11.500px;color:#222;font-weight:500}
.st2{width:92px;background:#e3e7ea;border-bottom:1px solid #ccd;text-align:center;line-height:28px;font-size:11.500px;color:#222;margin-left:1px;border-top:1px solid #d8dde2}
.sigbox{margin-top:4px;border:1px solid #e3e7ea;border-bottom:0;display:flex;padding-left:1px;height:374px}
.sigtable{width:363px;flex:none;overflow:hidden}
.shead{height:71px;display:grid;grid-template-columns:26px 24px 90px 63px 27px 73px 60px;background:#d8d8d8;position:relative;z-index:1}
.hc{border-right:1px solid #e3e7ea;padding-left:3px;font-size:11px;white-space:nowrap}
.hc b{font-weight:700;color:#333;display:block;line-height:14px}
.hc-c{display:flex;align-items:center;padding:0 0 0 5px;margin-bottom:12px}
.hc-nr{font-weight:700;display:flex;align-items:center;margin-bottom:12px;padding-left:4px}
.hc-name{padding-top:8px}
.hc-wert,.hc-eh,.hc-of,.hc-fa{padding-top:9px}
.hc-eh{padding-left:3px;overflow:hidden}
.pfad{display:flex;align-items:center;margin-top:12px;font-size:9.500px;line-height:13px;font-weight:500}
.spin{width:35px;height:21px;background:#fff;margin-left:5px;display:flex;justify-content:space-between;align-items:center;padding-left:8px;font-size:11px}
.spin em{font-style:normal}
.spin i{width:10px;height:18px;background:#5a7a90;margin-right:0;display:flex;flex-direction:column;align-items:center;justify-content:center;gap:3px}
.spin u{width:0;height:0;border:2.500px solid transparent;border-bottom-color:#fff;border-top:0}
.spin s{width:0;height:0;border:2.500px solid transparent;border-top-color:#fff;border-bottom:0}
.hex{display:flex;align-items:center;gap:6px;margin-top:12px;font-weight:500;font-size:9.500px}
.hin{background:#fff;height:21px;line-height:21px;padding-left:7px;margin-top:14px;border:1px solid #e6e9ec;letter-spacing:.3px}
.hc-of .hin{width:65px}
.hc-fa{border-right:0}
.cb{display:block;width:16px;height:16px;background:#f4f6f8;border:2px solid #e3e7ea;flex:none}
.cb.chk{background:#486a80;border:1px solid #f0f3f6;display:flex;align-items:center;justify-content:center}
.srows{height:302px;overflow:hidden}
.r{height:27px;display:grid;grid-template-columns:26px 24px 90px 63px 27px 73px 60px;align-items:center;background:#fff;white-space:nowrap;letter-spacing:.2px}
.r.first{margin-top:-7px}
.r.alt{background:#d8d8d8}
.r>span{padding-left:3px;height:27px;line-height:27px;border-right:1px solid #e3e7ea;overflow:hidden}
.r>span.nm{letter-spacing:0;padding-left:2px}
.eh{padding-left:2px!important;letter-spacing:0}
.k{height:27px;display:flex;align-items:center;justify-content:center}
.k4{background:#9467bd}.k5{background:#8c564b}.k6{background:#e377c2}.k7{background:#7f7f7f}.k8{background:#bcbd22}.k9{background:#17becf}.k10{background:#1f77b4}.k11{background:#ff7f0e}.k12{background:#2ca02c}.k13{background:#d62728}
.ci{height:27px;border-right:1px solid #e3e7ea;padding:2px 0 2px 1px}
.ci em{display:block;font-style:normal;background:#fff;border:1px solid #e3e7ea;height:23px;line-height:21px;padding-left:7px;letter-spacing:.3px}
.vscroll{width:16px;flex:none;position:relative;display:flex;flex-direction:column;align-items:center}
.up{margin-top:10px;width:0;height:0;border-left:4.500px solid transparent;border-right:4.500px solid transparent;border-bottom:5px solid #8c8c8c}
.thumb{display:block;margin-top:74px;width:9px;height:227px;border-radius:5px;background:#8c8c8c}
.down{margin-top:44px;width:0;height:0;border-left:4.500px solid transparent;border-right:4.500px solid transparent;border-top:5px solid #8c8c8c}
.foot{flex:none;height:36px;background:#e9edf1;display:flex;font-size:12.500px;color:#333;position:relative}
.opc{margin:2px 0 0 11px;width:100px;height:16px;line-height:16px;font-size:13px}
.mem{margin:14px 0 0 445px;line-height:16px;width:93px;white-space:nowrap}
.bar{margin:12px 0 0 0;width:96px;height:24px;border:1px solid #222;background:#d8d8d8;position:relative;text-align:center;line-height:22px;color:#222}
.bar i{position:absolute;left:0;top:0;bottom:0;width:74.190%;background:#5a7a90}
.bar span{position:relative}
.trig{margin:14px 0 0 66px;line-height:16px;white-space:nowrap}

.scheme{position:relative;width:571px;flex:none}
.diagram{display:block}
.ln *{fill:none;stroke:#333;stroke-width:1.300}
.ln .bg{fill:#f2f2f2}
.ln .dash{stroke-dasharray:5 3}
.dots{fill:#111}
.dt text{font-family:Roboto,sans-serif;font-size:15px;fill:#222}
.dt .sm{font-size:13px}
.dt .ty{letter-spacing:1px}
.dt .mid{text-anchor:middle}
.dt .bd{font-size:15px;font-weight:700}
.dt .bd2{font-size:15px;font-weight:500}
.dt .big{font-size:20px;font-weight:300}
.tagn rect{fill:#f2f2f2;stroke:#333;stroke-width:1.200}
.tagn text,.tago text{font-family:Roboto,sans-serif;font-size:14px;fill:#333;text-anchor:middle;letter-spacing:.3px}
.tago .o{fill:#fbbc62;filter:drop-shadow(0 2px 2px rgba(0,0,0,.2))}
.tago .w{fill:#f4f4f4;stroke:#333;stroke-width:1.200}
.tago.f .w{fill:#f3b866;stroke:#a87a3c}
.tago.f text{fill:#96763f}
.green rect{fill:none;stroke:#7fae6a;stroke-width:3}
.disp{position:absolute;height:23px;display:flex;font-size:13px;color:#7a7a7a;background:#ccc}
.disp .v{background:#e4e4e4;border-top:1.500px solid #bbb;border-left:1.500px solid #bbb;text-align:right;padding-right:8px;line-height:21px;flex:none}
.disp .un{flex:1;text-align:center;line-height:22px;color:#8a8a8a;white-space:nowrap}
.d1{left:396px;top:38px;width:94px}.d1 .v{width:60px}
.d2{left:18px;top:191px;width:81px}.d2 .v{width:51px}
.d3{left:462px;top:240px;width:81px}.d3 .v{width:51px}
.d4{left:265px;top:609px;width:86px}.d4 .v{width:47px}
.d5{left:327px;top:650px;width:81px}.d5 .v{width:53px}
.d6{left:63px;top:765px;width:86px}.d6 .v{width:46px}
.d7{left:63px;top:795px;width:86px}.d7 .v{width:47px}
```
FILE: chart.js
```js
(function () {
  var NS = 'http://www.w3.org/2000/svg';
  var svg = document.getElementById('chart');
  var L = 232, R = 745, T = 504, B = 810;
  var y0 = 673.3, k = 1.115, P = 17.45, C0 = 240.8;
  function Y(v) { return y0 - v * k; }
  var seed = 7;
  function rnd() { seed = (seed * 16807) % 2147483647; return seed / 2147483647 - 0.5; }
  function el(name, attrs, text, parent) {
    var e = document.createElementNS(NS, name);
    for (var a in attrs) e.setAttribute(a, attrs[a]);
    if (text) e.textContent = text;
    (parent || svg).appendChild(e);
    return e;
  }
  function poly(pts, color, w, op, clip) {
    var d = pts.map(function (p) { return p[0].toFixed(1) + ',' + p[1].toFixed(1); }).join(' ');
    var at = { points: d, fill: 'none', stroke: color, 'stroke-width': w, 'stroke-opacity': op || 1 };
    if (clip) at['clip-path'] = 'url(#' + clip + ')';
    el('polyline', at);
  }
  var defs = el('defs', {});
  [['pos', T, y0 - T], ['neg', y0, B - y0], ['plot', T, B - T]].forEach(function (c) {
    var cp = el('clipPath', { id: c[0] }, null, defs);
    el('rect', { x: L, y: c[1], width: R - L, height: c[2] }, null, cp);
  });
  var v;
  for (v = -100; v <= 150; v += 25) {
    el('line', { x1: L, x2: R, y1: Y(v), y2: Y(v), stroke: '#f0f0f0', 'stroke-width': 1 });
    el('text', { x: 228, y: Y(v) + 1.8, 'text-anchor': 'end', 'font-size': 5, fill: '#777', 'font-family': 'Liberation Sans' }, String(v));
    el('line', { x1: 228.5, x2: L, y1: Y(v), y2: Y(v), stroke: '#888', 'stroke-width': 0.7 });
  }
  for (v = -120; v <= 150; v += 5) {
    el('line', { x1: 230.5, x2: L, y1: Y(v), y2: Y(v), stroke: '#aaa', 'stroke-width': 0.5 });
  }
  var dx = (R - L) / 14;
  for (var i = 1; i <= 14; i++) {
    var x = L + i * dx, s = i * 30;
    var lab = '00:' + ('0' + Math.floor(s / 60)).slice(-2) + ':' + ('0' + (s % 60)).slice(-2) + '.000';
    el('line', { x1: x, x2: x, y1: T, y2: B, stroke: '#f0f0f0', 'stroke-width': 1 });
    el('line', { x1: x, x2: x, y1: B, y2: B + 2, stroke: '#888', 'stroke-width': 0.7 });
    el('text', { x: x, y: B + 7.5, 'text-anchor': 'middle', 'font-size': 4.9, fill: '#777', 'font-family': 'Liberation Sans' }, lab);
  }
  var n = 29;
  var red = [], yel = [], blu = [], cya = [], cya2 = [];
  var redTop = [], redBot = [], bluTop = [], bluLow = [], cyaTop = [], zero = [];
  var c, f, t, b, cy, j;
  for (i = -1; i < n; i++) {
    c = C0 + i * P; f = i / n;
    t = 124 + 3 * f; b = -97 + 8 * Math.max(f, 0);
    red.push([c - 5.6, Y(-10)], [c - 4.4, Y(70)], [c - 3, Y(t)]);
    red.push([c + 3, Y(t)], [c + 4.4, Y(60)], [c + 5, Y(0)], [c + 6, Y(-60)], [c + 6.8, Y(b)], [c + 11, Y(b)], [c + 11.6, Y(-40)]);
    var rt = [], rb = [];
    for (j = -3; j <= 3; j++) rt.push([c + j, Y(t - 2 + rnd() * 3 + (j === -1 || j === 1 ? 2.5 : 0))]);
    for (j = 7; j <= 11; j++) rb.push([c + j, Y(b + rnd() * 4 + (j === 9 ? -2 : 1))]);
    redTop.push(rt); redBot.push(rb);

    yel.push([c + 5, Y(80)], [c + 5.2, Y(102)], [c + 12.8, Y(102)], [c + 13, Y(80)], [c + 22.4, Y(80)]);

    for (j = 0; j < 2; j++) {
      var o = c + j * P / 2 - 1;
      blu.push([o, Y(32.5)], [o + 0.2, Y(77.5)], [o + 6, Y(77.5)], [o + 6.2, Y(32.5)], [o + 8.7, Y(32.5)]);
      bluTop.push([[o - 0.5, Y(77.5 + rnd() * 2)], [o + 3, Y(77.5 + rnd() * 2)], [o + 7, Y(77.5 + rnd() * 2)]]);
      bluLow.push([[o + 5.6, Y(32 + rnd() * 2.5)], [o + 7.5, Y(32.5 + rnd() * 2.5)], [o + 9.2, Y(32 + rnd() * 2.5)]]);
      zero.push([[o + 3.2, Y(rnd() * 2)], [o + 5, Y(rnd() * 2)]]);
      cya2.push([[o + 1, Y(0)], [o + 1, Y(32)]], [[o + 5.4, Y(0)], [o + 5.4, Y(32)]]);
    }
    cy = 60 - 6 * Math.max(f, 0);
    cya.push([c + 3.4, Y(0)], [c + 3.8, Y(cy - 4)], [c + 5, Y(cy)], [c + 8, Y(cy + 1)], [c + 10, Y(cy - 1)], [c + 11.5, Y(cy - 4)], [c + 12.5, Y(25)], [c + 13.5, Y(2)], [c + 15, Y(0)], [c + 20.8, Y(0)]);
  }
  var g = el('g', { 'clip-path': 'url(#plot)' });
  var sv = svg; svg = g;
  cya2.forEach(function (s) { poly(s, '#b8ecf2', 1.9, 1); });
  poly(yel, '#dcdc84', 1);
  poly(blu, '#7cb6e0', 0.9);
  poly(cya, '#5cd0dc', 1);
  poly(red, '#f8b4b8', 0.9, 1, 'pos');
  poly(red, '#ee7c84', 0.9, 1, 'neg');
  bluTop.forEach(function (s) { poly(s, '#1f77b4', 1.6); });
  bluLow.forEach(function (s) { poly(s, '#1f77b4', 1.4); });
  zero.forEach(function (s) { poly(s, '#4f9a98', 1.1); });
  redTop.forEach(function (s) { poly(s, '#dc2a36', 1.1); });
  redBot.forEach(function (s) { poly(s, '#dc2a36', 1.1); });
  svg = sv;
  el('path', { d: 'M' + L + ' ' + T + 'H' + R + 'V' + B, fill: 'none', stroke: '#b0b0b0', 'stroke-width': 1.2 });
  el('path', { d: 'M' + L + ' ' + T + 'V' + B + 'H' + R, fill: 'none', stroke: '#888', 'stroke-width': 1 });
})();
```
